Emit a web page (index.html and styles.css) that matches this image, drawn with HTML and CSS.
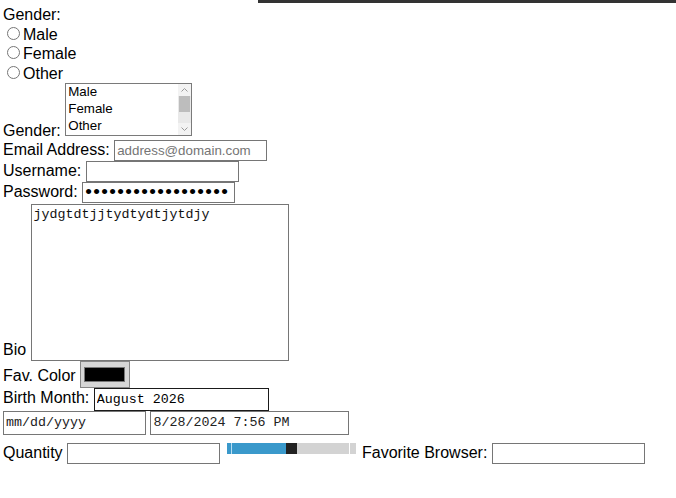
FILE: index.html
```html
<!DOCTYPE html>
<html lang="en">
<head>
<meta charset="utf-8">
<title>Form</title>
<link rel="stylesheet" href="styles.css">
</head>
<body>
<div class="topbar"></div>
<form class="form">
  <div class="line">Gender:</div>
  <div class="line"><label><input class="radio" type="radio" name="gender">Male</label></div>
  <div class="line"><label><input class="radio" type="radio" name="gender">Female</label></div>
  <div class="line"><label><input class="radio" type="radio" name="gender">Other</label></div>
  <div class="line"><label>Gender:</label> <span class="listbox"><span class="lb-inner"><span class="lb-options"><span class="lb-option">Male</span><span class="lb-option">Female</span><span class="lb-option">Other</span></span><span class="lb-scroll"><span class="lb-btn"><svg width="7" height="4" viewBox="0 0 7 4"><polyline points="0.5,3.5 3.5,0.5 6.5,3.5" fill="none" stroke="#9a9a9a" stroke-width="1"/></svg></span><span class="lb-thumb"></span><span class="lb-track"></span><span class="lb-btn"><svg width="7" height="4" viewBox="0 0 7 4"><polyline points="0.5,0.5 3.5,3.5 6.5,0.5" fill="none" stroke="#9a9a9a" stroke-width="1"/></svg></span></span></span></span></div>
  <div class="line"><label>Email Address:</label> <input class="field" type="email" placeholder="address@domain.com"></div>
  <div class="line"><label>Username:</label> <input class="field" type="text"></div>
  <div class="line"><label>Password:</label> <input class="field pw" type="password" value="qwertyuiopasdfghjk"></div>
  <div class="row-end bio-row"><label class="bio-label">Bio</label><textarea class="textarea">jydgtdtjjtydtydtjytdjy</textarea></div>
  <div class="row-end"><label class="color-label">Fav. Color</label><input class="color" type="color" value="#000000"></div>
  <div class="line"><label>Birth Month:</label> <input class="field mono month" type="text" value="August 2026"></div>
  <div class="line"><input class="field mono date" type="text" placeholder="mm/dd/yyyy"> <input class="field mono datetime" type="text" value="8/28/2024 7:56 PM"></div>
  <div class="line qty-row"><label>Quantity</label> <input class="field" type="number"> <input class="range" type="range" min="0" max="100" value="50"> <label>Favorite Browser:</label> <input class="field" type="text"></div>
</form>
</body>
</html>
```
FILE: styles.css
```css
* { box-sizing: border-box; }
body {
  margin: 0;
  font-family: "Liberation Sans", Arial, sans-serif;
  font-size: 16px;
  color: #000;
  background: #fff;
}
.topbar {
  height: 3px;
  margin-left: 258px;
  background: #333;
}
.form {
  padding: 3px 3px 0;
}
.line {
  white-space: nowrap;
}
.radio {
  width: 13px;
  height: 13px;
  margin: 2.6px 3px 0 4px;
  vertical-align: baseline;
}
.field {
  font-family: "Liberation Sans", Arial, sans-serif;
  font-size: 13.33px;
  width: 153px;
  height: 21px;
  margin: 0;
  padding: 1px 2px;
  border: 1px solid #767676;
  border-radius: 0;
  background: #fff;
  color: #000;
  outline: none;
  -webkit-appearance: none;
  appearance: none;
  vertical-align: baseline;
}
.field::placeholder { color: #757575; opacity: 1; }
.field::-webkit-inner-spin-button,
.field::-webkit-outer-spin-button { -webkit-appearance: none; margin: 0; }
.pw {
  font-size: 19px;
  letter-spacing: 1.35px;
  color: #000;
  vertical-align: -2px;
}
.mono {
  font-family: "Liberation Mono", "Courier New", monospace;
  font-size: 13.33px;
}
.month {
  width: 175px;
  height: 23px;
  border-color: #1a1a1a;
}
.date {
  width: 143px;
  height: 24px;
}
.date::placeholder { color: #222; }
.datetime {
  width: 199px;
  height: 24px;
  color: #222;
}
.row-end {
  display: flex;
  align-items: flex-end;
  column-gap: 4.45px;
}
.bio-row { margin-top: 1px; }
.bio-label { margin-bottom: 2px; }
.textarea {
  display: block;
  width: 258px;
  height: 157px;
  margin: 0;
  padding: 2px;
  border: 1px solid #767676;
  border-radius: 0;
  resize: none;
  outline: none;
  font-family: "Liberation Mono", "Courier New", monospace;
  font-size: 13.33px;
  color: #111;
}
.color-label { margin-bottom: 3px; }
.color {
  -webkit-appearance: none;
  appearance: none;
  display: block;
  width: 50px;
  height: 27px;
  margin: 0;
  padding: 0;
  border: 1px solid #868686;
  border-radius: 0;
  background: #d6d6d6;
}
.color::-webkit-color-swatch-wrapper {
  padding: 5px 4px 5px 3px;
}
.color::-webkit-color-swatch {
  border: 1px solid #777;
  border-radius: 0;
}
.listbox {
  display: inline-block;
  width: 127px;
  height: 53px;
  border: 1px solid #7a7a7a;
  overflow: hidden;
  vertical-align: baseline;
  background: #fff;
}
.lb-inner {
  display: flex;
  height: 100%;
}
.lb-options {
  flex: 1;
  display: flex;
  flex-direction: column;
  font-size: 13.33px;
}
.lb-option {
  height: 17px;
  line-height: 15px;
  padding: 0 2px;
}
.lb-scroll {
  width: 13px;
  display: flex;
  flex-direction: column;
  background: #e9e9e9;
}
.lb-btn {
  height: 12px;
  display: flex;
  align-items: center;
  justify-content: center;
  background: #f3f3f3;
}
.lb-thumb {
  height: 16px;
  margin: 0 1px;
  background: #bdbdbd;
}
.lb-track { flex: 1; }
.qty-row { padding-top: 8px; }
.range {
  -webkit-appearance: none;
  appearance: none;
  width: 129px;
  height: 11px;
  margin: 0 2px;
  padding: 0;
  background: transparent;
  vertical-align: top;
}
.range::-webkit-slider-runnable-track {
  height: 11px;
  border: 0;
  background: linear-gradient(to right, #3a99cb 0 4px, #b8def3 4px 5px, #3a99cb 5px 59px, #d3d3d3 59px 122px, #fff 122px 123px, #d3d3d3 123px 129px);
}
.range::-webkit-slider-thumb {
  -webkit-appearance: none;
  appearance: none;
  width: 11px;
  height: 11px;
  border: 0;
  border-radius: 0;
  background: #222;
}
```
